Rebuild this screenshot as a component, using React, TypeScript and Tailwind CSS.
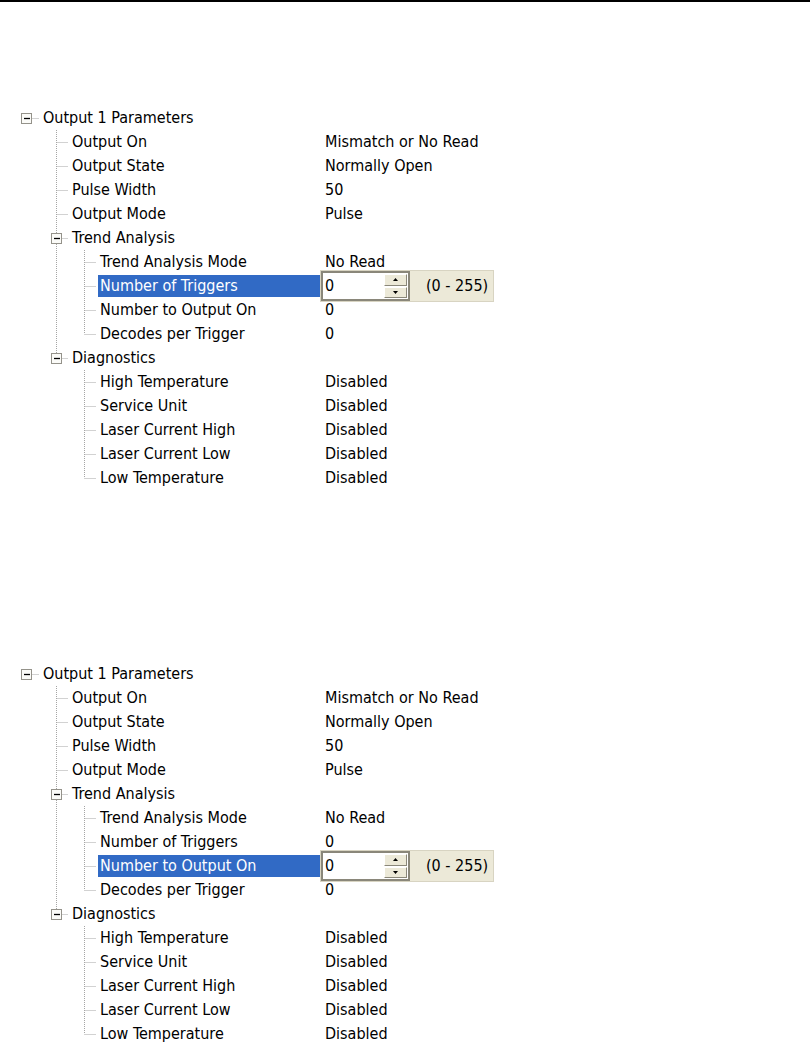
import React from "react";

type Row = {
  label: string;
  level: 0 | 1 | 2;
  value?: string;
  box?: boolean;
  last?: boolean;
  rail?: boolean;
};

const ROWS: Row[] = [
  { label: "Output 1 Parameters", level: 0, box: true },
  { label: "Output On", level: 1, value: "Mismatch or No Read" },
  { label: "Output State", level: 1, value: "Normally Open" },
  { label: "Pulse Width", level: 1, value: "50" },
  { label: "Output Mode", level: 1, value: "Pulse" },
  { label: "Trend Analysis", level: 1, box: true },
  { label: "Trend Analysis Mode", level: 2, rail: true, value: "No Read" },
  { label: "Number of Triggers", level: 2, rail: true, value: "0" },
  { label: "Number to Output On", level: 2, rail: true, value: "0" },
  { label: "Decodes per Trigger", level: 2, rail: true, last: true, value: "0" },
  { label: "Diagnostics", level: 1, box: true, last: true },
  { label: "High Temperature", level: 2, value: "Disabled" },
  { label: "Service Unit", level: 2, value: "Disabled" },
  { label: "Laser Current High", level: 2, value: "Disabled" },
  { label: "Laser Current Low", level: 2, value: "Disabled" },
  { label: "Low Temperature", level: 2, last: true, value: "Disabled" },
];

// x of the connector line for each level, and width of the gutter before the label
const LINE_X = [26, 56, 84];
const GUTTER = [41, 70, 98];
const DOT = "#a5a5a5";

function Gutter({ row }: { row: Row }) {
  const w = GUTTER[row.level];
  const cx = LINE_X[row.level] + 0.5;
  return (
    <svg width={w} height={24} className="shrink-0 block">
      <g stroke={DOT} strokeWidth={1} strokeDasharray="1 1">
        {row.rail && <line x1={56.5} y1={0} x2={56.5} y2={24} />}
        {row.level > 0 && <line x1={cx} y1={0} x2={cx} y2={row.last ? 12 : 24} />}
        <line x1={cx} y1={12.5} x2={w - 2} y2={12.5} />
        {row.box && <line x1={row.level === 0 ? 56.5 : 84.5} y1={18} x2={row.level === 0 ? 56.5 : 84.5} y2={24} />}
      </g>
      {row.box && (
        <g>
          <rect x={cx - 5} y={7.5} width={10} height={10} fill="#fbfbf8" stroke="#94928a" />
          <line x1={cx - 2.5} y1={12.5} x2={cx + 3.5} y2={12.5} stroke="#000000" strokeWidth={1.3} />
        </g>
      )}
    </svg>
  );
}

function SpinEdit() {
  return (
    <div className="flex h-[32px] w-[174px] shrink-0 bg-[#ECE9D8] border border-[#d8d4c2]">
      <div className="flex h-full w-[89px] items-stretch border-2 border-[#8a877a] bg-white">
        <div className="flex-1 flex items-center pl-[2px] text-black">0</div>
        <div className="flex w-[24px] flex-col gap-[1px] py-[1px] pr-[1px]">
          <div className="flex flex-1 items-center justify-center bg-[#ECE9D8] border border-t-white border-l-white border-r-[#8a877a] border-b-[#8a877a]">
            <svg width="5" height="3" viewBox="0 0 5 3">
              <path d="M2.5 0 L5 3 L0 3 Z" fill="#000" />
            </svg>
          </div>
          <div className="flex flex-1 items-center justify-center bg-[#ECE9D8] border border-t-white border-l-white border-r-[#8a877a] border-b-[#8a877a]">
            <svg width="5" height="3" viewBox="0 0 5 3">
              <path d="M0 0 L5 0 L2.5 3 Z" fill="#000" />
            </svg>
          </div>
        </div>
      </div>
      <div className="flex flex-1 items-center pl-[16px] text-black">(0 - 255)</div>
    </div>
  );
}

function Tree({ editing }: { editing: number }) {
  return (
    <div className="flex flex-col">
      {ROWS.map((row, i) => {
        const active = i === editing;
        return (
          <div key={i} className="flex h-[24px] items-center">
            <div className="flex w-[320px] shrink-0 items-center">
              <Gutter row={row} />
              <div
                className={
                  active
                    ? "flex h-[22px] flex-1 items-center bg-[#316AC5] pl-[2px] text-white"
                    : "flex h-[22px] items-center pl-[2px] text-black"
                }
              >
                {row.label}
              </div>
            </div>
            {active ? (
              <SpinEdit />
            ) : (
              <div className="pl-[5px] text-black">{row.value ?? ""}</div>
            )}
          </div>
        );
      })}
    </div>
  );
}

export default function App() {
  return (
    <div className="min-h-[1049px] w-[810px] bg-white border-t-2 border-black font-['DejaVu_Sans_Condensed','Liberation_Sans',sans-serif] text-[16px] leading-none">
      <div className="pt-[104px]">
        <Tree editing={7} />
      </div>
      <div className="mt-[172px]">
        <Tree editing={8} />
      </div>
    </div>
  );
}
